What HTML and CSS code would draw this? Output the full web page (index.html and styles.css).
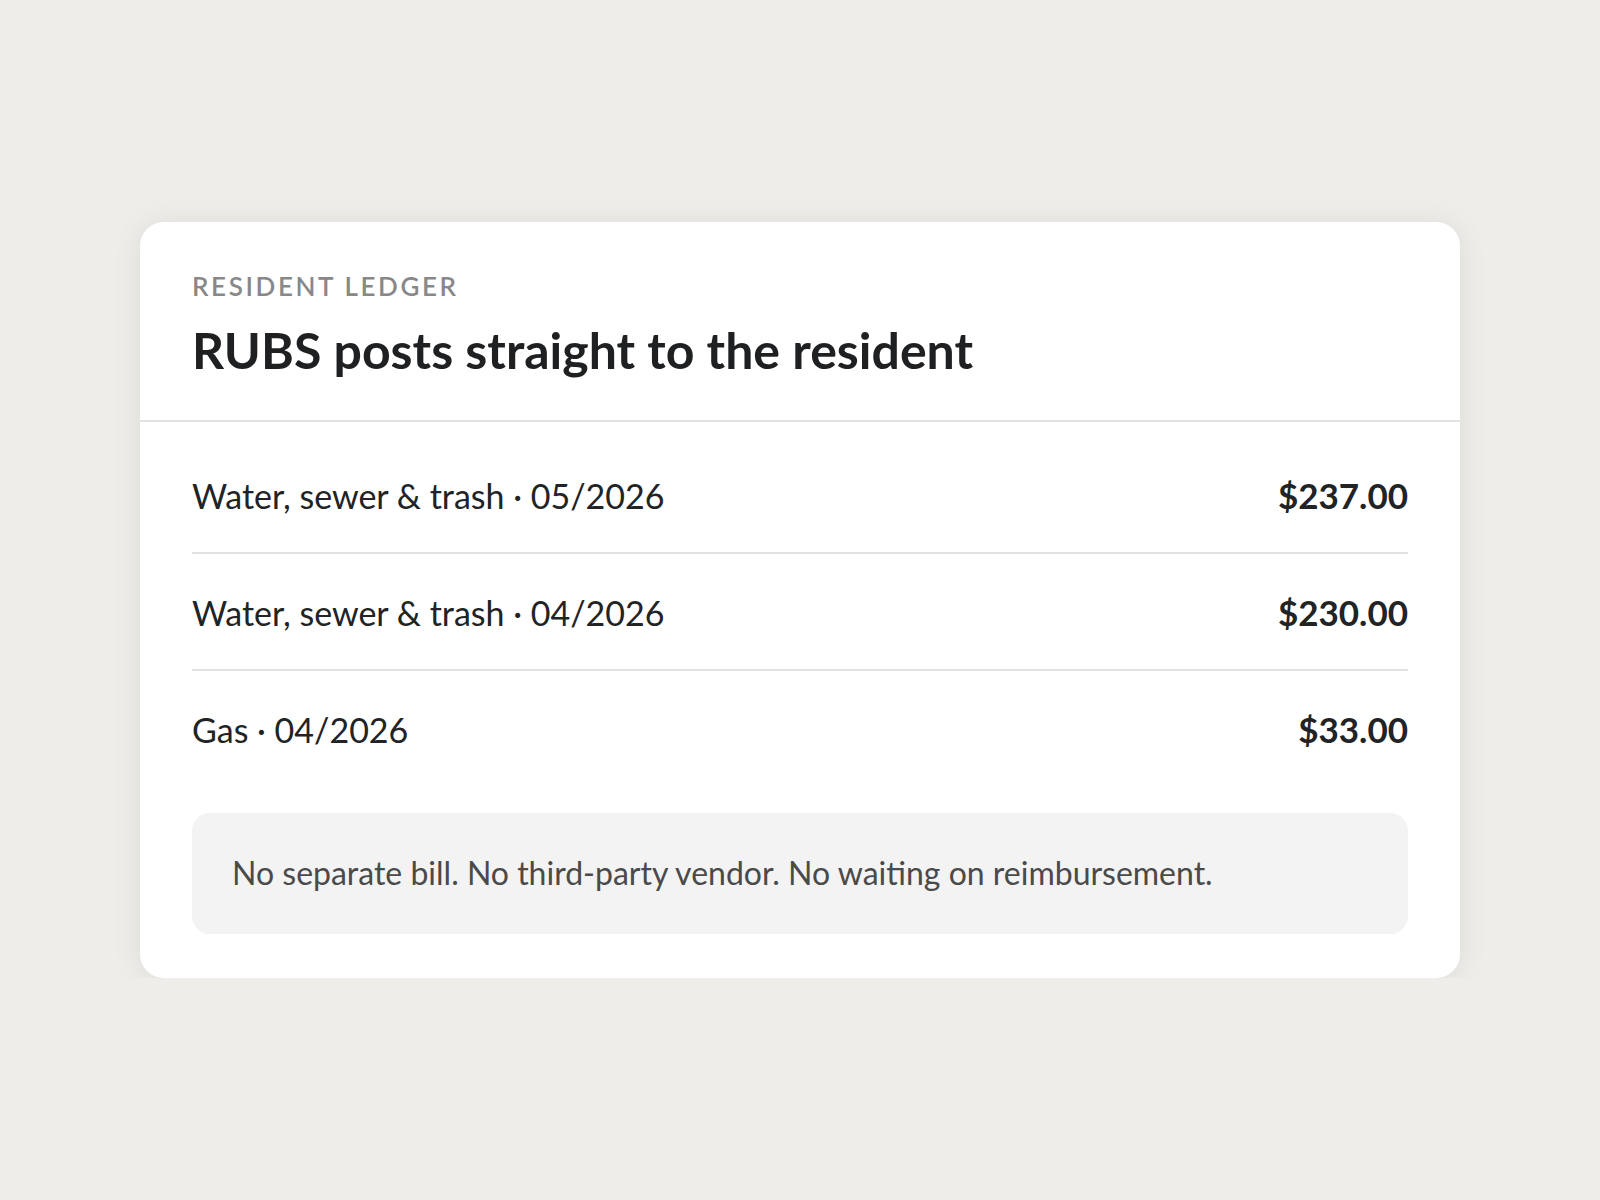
FILE: index.html
```html
<!DOCTYPE html>
<html lang="en">
  <head>
    <meta charset="UTF-8" />
    <meta name="viewport" content="width=device-width, initial-scale=1.0" />
    <title>Resident Ledger</title>

    <link rel="stylesheet" href="styles.css">
  </head>
  <body>
    <div class="page">
      <section class="ledger-card">
        <header class="ledger-head">
          <p class="eyebrow">Resident Ledger</p>
          <h1 class="ledger-title">RUBS posts straight to the resident</h1>
        </header>

        <ul class="ledger-list">
          <li class="ledger-row">
            <span class="row-label">Water, sewer &amp; trash &middot; 05/2026</span>
            <span class="row-amount">$237.00</span>
          </li>
          <li class="ledger-row">
            <span class="row-label">Water, sewer &amp; trash &middot; 04/2026</span>
            <span class="row-amount">$230.00</span>
          </li>
          <li class="ledger-row">
            <span class="row-label">Gas &middot; 04/2026</span>
            <span class="row-amount">$33.00</span>
          </li>
        </ul>

        <p class="ledger-note">
          No separate bill. No third-party vendor. No waiting on reimbursement.
        </p>
      </section>
    </div>
  </body>
</html>
```
FILE: styles.css
```css
body {
  margin: 0;
  background: #eeede9;
  font-family: Lato, "Noto Sans", sans-serif;
  color: #212325;
}

.page {
  padding-top: 222px;
}

.ledger-card {
  width: 1320px;
  margin: 0 auto;
  box-sizing: border-box;
  padding-bottom: 44px;
  background: #fff;
  border-radius: 24px;
  box-shadow: 0 2px 30px rgba(0, 0, 0, 0.08);
}

.ledger-head {
  padding: 48px 52px 40px;
  border-bottom: 2px solid #e2e2e2;
}

.eyebrow {
  margin: 0 0 18px;
  font-size: 26px;
  line-height: 32px;
  font-weight: 600;
  letter-spacing: 0.1em;
  text-transform: uppercase;
  color: #888;
}

.ledger-title {
  margin: 0;
  font-size: 50px;
  line-height: 60px;
  font-weight: 700;
  color: #1e2022;
}

.ledger-list {
  list-style: none;
  margin: 0 52px;
  padding: 15px 0 0;
}

.ledger-row {
  display: flex;
  justify-content: space-between;
  align-items: baseline;
  padding: 40px 0 38px;
  border-bottom: 2px solid #e2e2e2;
  font-size: 34px;
  line-height: 36px;
}

.ledger-row:last-child {
  border-bottom: none;
}

.row-amount {
  font-size: 35px;
  font-weight: 700;
}

.ledger-note {
  margin: 27px 52px 0;
  padding: 36px 40px 37px;
  background: #f3f3f3;
  border-radius: 18px;
  font-size: 32px;
  line-height: 48px;
  color: #4a4a4a;
}
```
